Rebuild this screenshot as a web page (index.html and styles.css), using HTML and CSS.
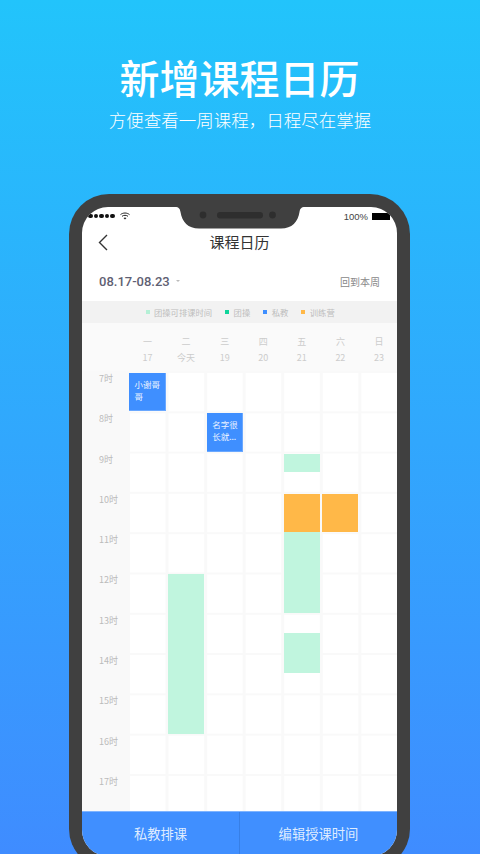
FILE: index.html
```html
<!DOCTYPE html>
<html lang="zh-CN">
  <head>
    <meta charset="UTF-8" />
    <meta name="viewport" content="width=device-width, initial-scale=1.0" />
    <title>新增课程日历</title>
    <link rel="stylesheet" href="styles.css">
  </head>
  <body>
    <h1>新增课程日历</h1>
    <p class="sub">方便查看一周课程，日程尽在掌握</p>

    <div class="phone">
      <div class="screen">
        <!-- notch -->
        <svg class="notch" width="130" height="22" viewBox="0 0 130 22">
          <path d="M0 0C4 0 5 2 5.5 5C7 15 13 21.5 24 21.5H106C117 21.5 123 15 124.5 5C125 2 126 0 130 0Z" fill="#404040"/>
          <circle cx="28" cy="8" r="3.4" fill="#2e2e2e"/>
          <rect x="42" y="5" width="46" height="6.5" rx="3.2" fill="#2e2e2e"/>
          <circle cx="97.500" cy="8" r="3.4" fill="#2e2e2e"/>
        </svg>

        <div class="status">
          <div class="signal">
            <span></span><span></span><span></span><span></span><span></span>
            <svg class="wifi" width="10" height="8" viewBox="0 0 10 8">
              <path d="M.5 2.6C3 .5 7 .5 9.500 2.600M2 4.300C3.700 3 6.300 3 8 4.300" fill="none" stroke="#222" stroke-width="1"/>
              <path d="M3.500 5.900C4.400 5.200 5.600 5.200 6.500 5.900L5 7.500Z" fill="#222"/>
            </svg>
          </div>
          <div class="power">100%<span class="battery"></span></div>
        </div>

        <div class="nav">
          <svg class="back" width="10" height="17" viewBox="0 0 10 17">
            <path d="M9 1L1.500 8.500L9 16" fill="none" stroke="#333" stroke-width="1.400"/>
          </svg>
          <span>课程日历</span>
        </div>

        <div class="range">
          <div class="dates">08.17-08.23<i></i></div>
          <a class="this-week">回到本周</a>
        </div>

        <ul class="legend">
          <li><i class="c-free"></i>团操可排课时间</li>
          <li><i class="c-group"></i>团操</li>
          <li><i class="c-private"></i>私教</li>
          <li><i class="c-camp"></i>训练营</li>
        </ul>

        <div class="head">
          <div><b>一</b>17</div>
          <div><b>二</b>今天</div>
          <div><b>三</b>19</div>
          <div><b>四</b>20</div>
          <div><b>五</b>21</div>
          <div><b>六</b>22</div>
          <div><b>日</b>23</div>
        </div>

        <div class="schedule">
          <ul class="hours">
            <li>7时</li><li>8时</li><li>9时</li><li>10时</li><li>11时</li><li>12时</li>
            <li>13时</li><li>14时</li><li>15时</li><li>16时</li><li>17时</li>
          </ul>
          <div class="board">
            <div class="ev private ev1">小谢哥哥</div>
            <div class="ev private ev2">名字很<br>长就...</div>
            <div class="ev free ev3"></div>
            <div class="ev camp ev4"></div>
            <div class="ev camp ev5"></div>
            <div class="ev free ev6"></div>
            <div class="ev free ev7"></div>
            <div class="ev free ev8"></div>
          </div>
        </div>

        <div class="bar">
          <a>私教排课</a>
          <a>编辑授课时间</a>
        </div>
      </div>
    </div>
  </body>
</html>
```

FILE: styles.css
```css
* {
  margin: 0;
  padding: 0;
  box-sizing: border-box;
}
ul {
  list-style: none;
}
html, body {
  height: 854px;
  overflow: hidden;
}
body {
  background: linear-gradient(#22c4fb, #3f8cff);
  font-family: "Noto Sans CJK SC", "Noto Sans", sans-serif;
  color: #fff;
  text-align: center;
}
h1 {
  padding: 48px 1px 0 0;
  font-size: 40px;
  line-height: 58px;
  font-weight: 500;
}
.sub {
  margin-top: 1px;
  font-size: 17.500px;
  line-height: 26px;
  font-weight: 300;
}

/* phone */
.phone {
  width: 341px;
  height: 675px;
  margin: 61px 0 0 69px;
  padding: 13px;
  background: #404040;
  border-radius: 40px;
}
.screen {
  position: relative;
  display: flex;
  flex-direction: column;
  height: 649px;
  overflow: hidden;
  background: #fff;
  border-radius: 26px;
  color: #333;
}
.notch {
  position: absolute;
  top: 0;
  left: 93px;
}

/* status bar */
.status {
  display: flex;
  justify-content: space-between;
  align-items: center;
  height: 18px;
  margin-bottom: 4px;
  padding: 0 7px 0 6px;
  font-family: "Liberation Sans", sans-serif;
  font-size: 9.500px;
  color: #444;
}
.signal {
  display: flex;
  align-items: center;
  gap: 1px;
}
.signal span {
  width: 4.500px;
  height: 4.500px;
  border-radius: 50%;
  background: #111;
}
.wifi {
  margin-left: 4px;
}
.power {
  display: flex;
  align-items: center;
  gap: 4px;
}
.battery {
  width: 18px;
  height: 7px;
  background: #000;
}

/* nav */
.nav {
  position: relative;
  height: 26px;
  font-size: 15px;
  line-height: 26px;
  font-weight: 400;
}
.back {
  position: absolute;
  left: 16px;
  top: 5px;
}
.range {
  display: flex;
  justify-content: space-between;
  align-items: center;
  height: 46px;
  padding: 6px 17px 0;
}
.dates {
  display: flex;
  align-items: center;
  font-family: Roboto, sans-serif;
  font-size: 13px;
  font-weight: 500;
  color: #5f5f73;
}
.dates i {
  margin: 0 0 0 6px;
  border: 2px solid transparent;
  border-top: 2px solid #bbb;
  border-bottom: 0;
}
.this-week {
  font-size: 10px;
  color: #888;
}

/* legend */
.legend {
  display: flex;
  align-items: center;
  height: 22px;
  padding-left: 63.500px;
  background: #f2f2f2;
  font-size: 8.300px;
  color: #bdbdbd;
}
.legend li {
  display: flex;
  align-items: center;
  margin-right: 13px;
}
.legend i {
  width: 4px;
  height: 4px;
  margin-right: 4.500px;
}
.c-free { background: #b5f0d6; }
.c-group { background: #10d49a; }
.c-private { background: #3f8fff; }
.c-camp { background: #ffb848; }

/* week head */
.head {
  display: grid;
  grid-template-columns: repeat(7, 1fr);
  height: 48px;
  padding: 11px 0 0 45px;
  background: #fafafa;
  font-size: 9px;
  line-height: 15.500px;
  color: #ccc;
}
.head div {
  padding-left: 2.500px;
}
.head b {
  display: block;
  font-weight: 400;
}

/* schedule */
.schedule {
  display: flex;
  flex: 1;
  min-height: 0;
  overflow: hidden;
}
.hours {
  flex: none;
  width: 45px;
  padding-left: 17px;
  background: #f9f9f9;
  font-size: 9px;
  line-height: 16px;
  color: #bbb;
  text-align: left;
}
.hours li {
  height: 40.300px;
}
.board {
  flex: 1;
  display: grid;
  grid-template-columns: repeat(7, 1fr);
  grid-template-rows: repeat(22, 20.150px);
  background-color: #fff;
  background-image:
    linear-gradient(to right, #f9f9f9 2.500px, transparent 2.500px),
    linear-gradient(#f9f9f9 2px, transparent 2px);
  background-size: 38.571px 100%, 100% 40.300px;
}
.ev {
  margin: 2px 0 0 2.500px;
}
.private {
  padding: 6px 0 0 5.500px;
  background: #3f8fff;
  border: 1px solid #6aa8ff;
  border-width: 0 1px 1px 0;
  font-size: 8.500px;
  line-height: 11.500px;
  color: #e8f2ff;
  text-align: left;
}
.free { background: #c0f5de; }
.camp { background: #ffb848; }
.ev1 { grid-column: 1; grid-row: 1 / 3; margin-left: 2px; }
.ev2 { grid-column: 3; grid-row: 3 / 5; }
.ev3 { grid-column: 5; grid-row: 5 / 6; }
.ev4 { grid-column: 5; grid-row: 7 / 9; }
.ev5 { grid-column: 6; grid-row: 7 / 9; }
.ev6 { grid-column: 5; grid-row: 9 / 13; margin-top: 0; }
.ev7 { grid-column: 5; grid-row: 14 / 16; margin-top: 0; }
.ev8 { grid-column: 2; grid-row: 11 / 19; }

/* bottom buttons */
.bar {
  display: flex;
  flex: none;
  height: 45px;
  background: #408fff;
  border-top: 1px solid #7fb4ff;
  font-size: 13.300px;
  line-height: 43px;
  color: #dfecff;
}
.bar a {
  flex: 1;
}
.bar a + a {
  border-left: 1px solid #377fe6;
}
```
